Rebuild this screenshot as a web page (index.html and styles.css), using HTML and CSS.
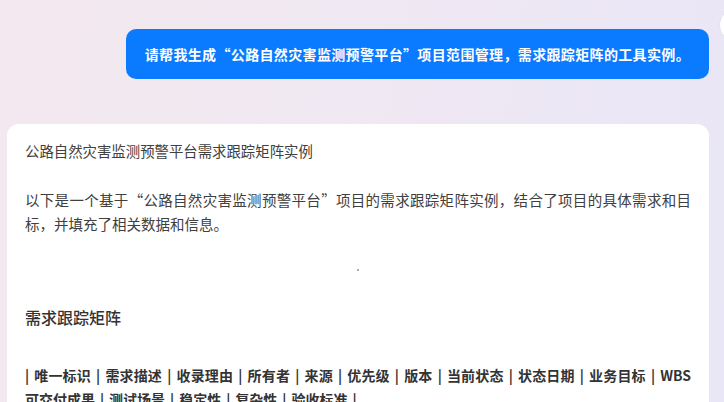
FILE: index.html
```html
<!DOCTYPE html>
<html lang="zh-CN">
<head>
    <meta charset="utf-8" />
    <title>需求跟踪矩阵</title>
    <link rel="stylesheet" href="styles.css">
</head>
<body>

    <div id="chat">
        <div class="row user">
            <div class="bubble">请帮我生成“公路自然灾害监测预警平台”项目范围管理，需求跟踪矩阵的工具实例。</div>
            <div class="avatar"></div>
        </div>

        <div class="answer">
            <p class="title">公路自然灾害监测预警平台需求跟踪矩阵实例</p>
            <p class="intro">以下是一个基于“公路自然灾害监测预警平台”项目的需求跟踪矩阵实例，结合了项目的具体需求和目标，并填充了相关数据和信息。</p>
            <div class="dot"></div>
            <h3>需求跟踪矩阵</h3>
            <p class="table">| 唯一标识 | 需求描述 | 收录理由 | 所有者 | 来源 | 优先级 | 版本 | 当前状态 | 状态日期 | 业务目标 | WBS 可交付成果 | 测试场景 | 稳定性 | 复杂性 | 验收标准 |</p>
        </div>
    </div>

</body>
</html>
```

FILE: styles.css
```css
html, body {
    height: 100%;
}

body {
    margin: 0;
    padding: 0;
    overflow: hidden;
    color: #404040;
    font: 14px 'Microsoft YaHei', 'Noto Sans CJK SC', 'Noto Sans', sans-serif;
    background: linear-gradient(100deg, #f4e8ef 0%, #f0e8f2 45%, #e9e6f7 100%);
}

#chat {
    padding: 9px 15px 0 7px;
}

.row {
    display: flex;
    align-items: flex-start;
}

    .row.user {
        justify-content: flex-end;
        margin-right: -43px;
    }

.bubble {
    background: #0a7aff;
    color: #fff;
    font-weight: 600;
    letter-spacing: 0.35px;
    line-height: 22px;
    padding: 14px 19px 14px 19px;
    margin-top: 20px;
    border-radius: 10px;
}

.avatar {
    width: 32px;
    height: 32px;
    flex: none;
    margin-left: 11px;
    border-radius: 50%;
    background: #fff;
    box-shadow: 0 0 2px rgba(0, 0, 0, 0.08);
}

.answer {
    background: #fff;
    border-radius: 12px;
    margin-top: 45px;
    padding: 15px 18px 20px 18px;
    min-height: 300px;
}

    .answer p {
        margin: 0;
    }

    .answer .title {
        line-height: 24px;
        font-size: 14.4px;
        margin-bottom: 25px;
    }

    .answer .intro {
        font-size: 14.5px;
        line-height: 24px;
        text-align: justify;
    }

.dot {
    width: 2px;
    height: 2px;
    background: #aaa;
    margin: 33px auto 0;
}

h3 {
    font-size: 16px;
    font-weight: 500;
    color: #333;
    line-height: 24px;
    margin: 34px 0 0 0;
}

.answer .table {
    margin-top: 34px;
    font-weight: bold;
    color: #333;
    line-height: 24px;
    word-spacing: 1.8px;
    text-align: justify;
}
```
